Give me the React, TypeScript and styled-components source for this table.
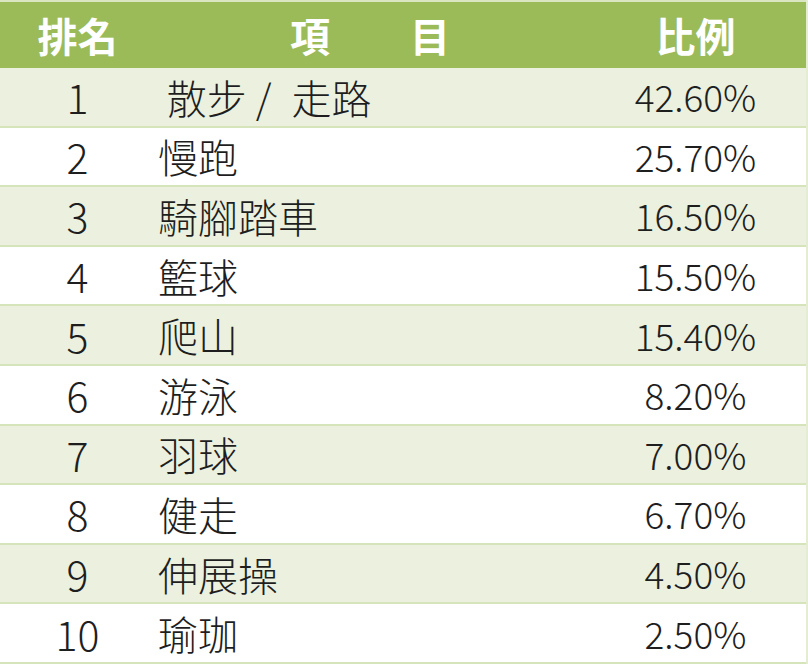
import React from "react";
import styled, { createGlobalStyle } from "styled-components";

const Global = createGlobalStyle`
  html, body { margin: 0; padding: 0; background: #ffffff; }
  body { font-family: "Noto Sans CJK TC", "Noto Sans", sans-serif; }
`;

const Table = styled.div`
  width: 808px;
  height: 664px;
  display: flex;
  flex-direction: column;
  box-sizing: border-box;
  border-right: 2px solid #e4edd2;
`;

const Cols = `
  display: grid;
  grid-template-columns: 155px 430px 1fr;
  align-items: center;
`;

const HeaderRow = styled.div`
  ${Cols}
  height: 68px;
  flex: 0 0 68px;
  box-sizing: border-box;
  background: #9bbb59;
  border-top: 2px solid #d9e6bf;
  color: #ffffff;
  font-weight: 700;
  font-size: 40px;
`;

const Row = styled.div<{ $shaded: boolean }>`
  ${Cols}
  flex: 1 1 0;
  box-sizing: border-box;
  background: ${(p) => (p.$shaded ? "#ebf1de" : "#ffffff")};
  border-bottom: 2px solid #d6e4bb;
  color: #1e1e1e;
  font-weight: 300;
`;

const Rank = styled.div`
  text-align: center;
  line-height: 1;
  font-size: 41px;
`;

const Pct = styled.div`
  text-align: center;
  line-height: 1;
  font-size: 37px;
`;

const Item = styled.div`
  padding-left: 3px;
  line-height: 1;
  white-space: pre;
  font-size: 40px;
`;

const HeadCell = styled.div`
  text-align: center;
  line-height: 1;
  white-space: pre;
`;

const data: [string, string, string][] = [
  ["1", " 散步 /\u2002走路", "42.60%"],
  ["2", "慢跑", "25.70%"],
  ["3", "騎腳踏車", "16.50%"],
  ["4", "籃球", "15.50%"],
  ["5", "爬山", "15.40%"],
  ["6", "游泳", "8.20%"],
  ["7", "羽球", "7.00%"],
  ["8", "健走", "6.70%"],
  ["9", "伸展操", "4.50%"],
  ["10", "瑜珈", "2.50%"],
];

export default function App() {
  return (
    <>
      <Global />
      <Table>
        <HeaderRow>
          <HeadCell>排名</HeadCell>
          <HeadCell>{"項　　目"}</HeadCell>
          <HeadCell>比例</HeadCell>
        </HeaderRow>
        {data.map(([rank, name, pct], i) => (
          <Row key={rank} $shaded={i % 2 === 0}>
            <Rank>{rank}</Rank>
            <Item>{name}</Item>
            <Pct>{pct}</Pct>
          </Row>
        ))}
      </Table>
    </>
  );
}
